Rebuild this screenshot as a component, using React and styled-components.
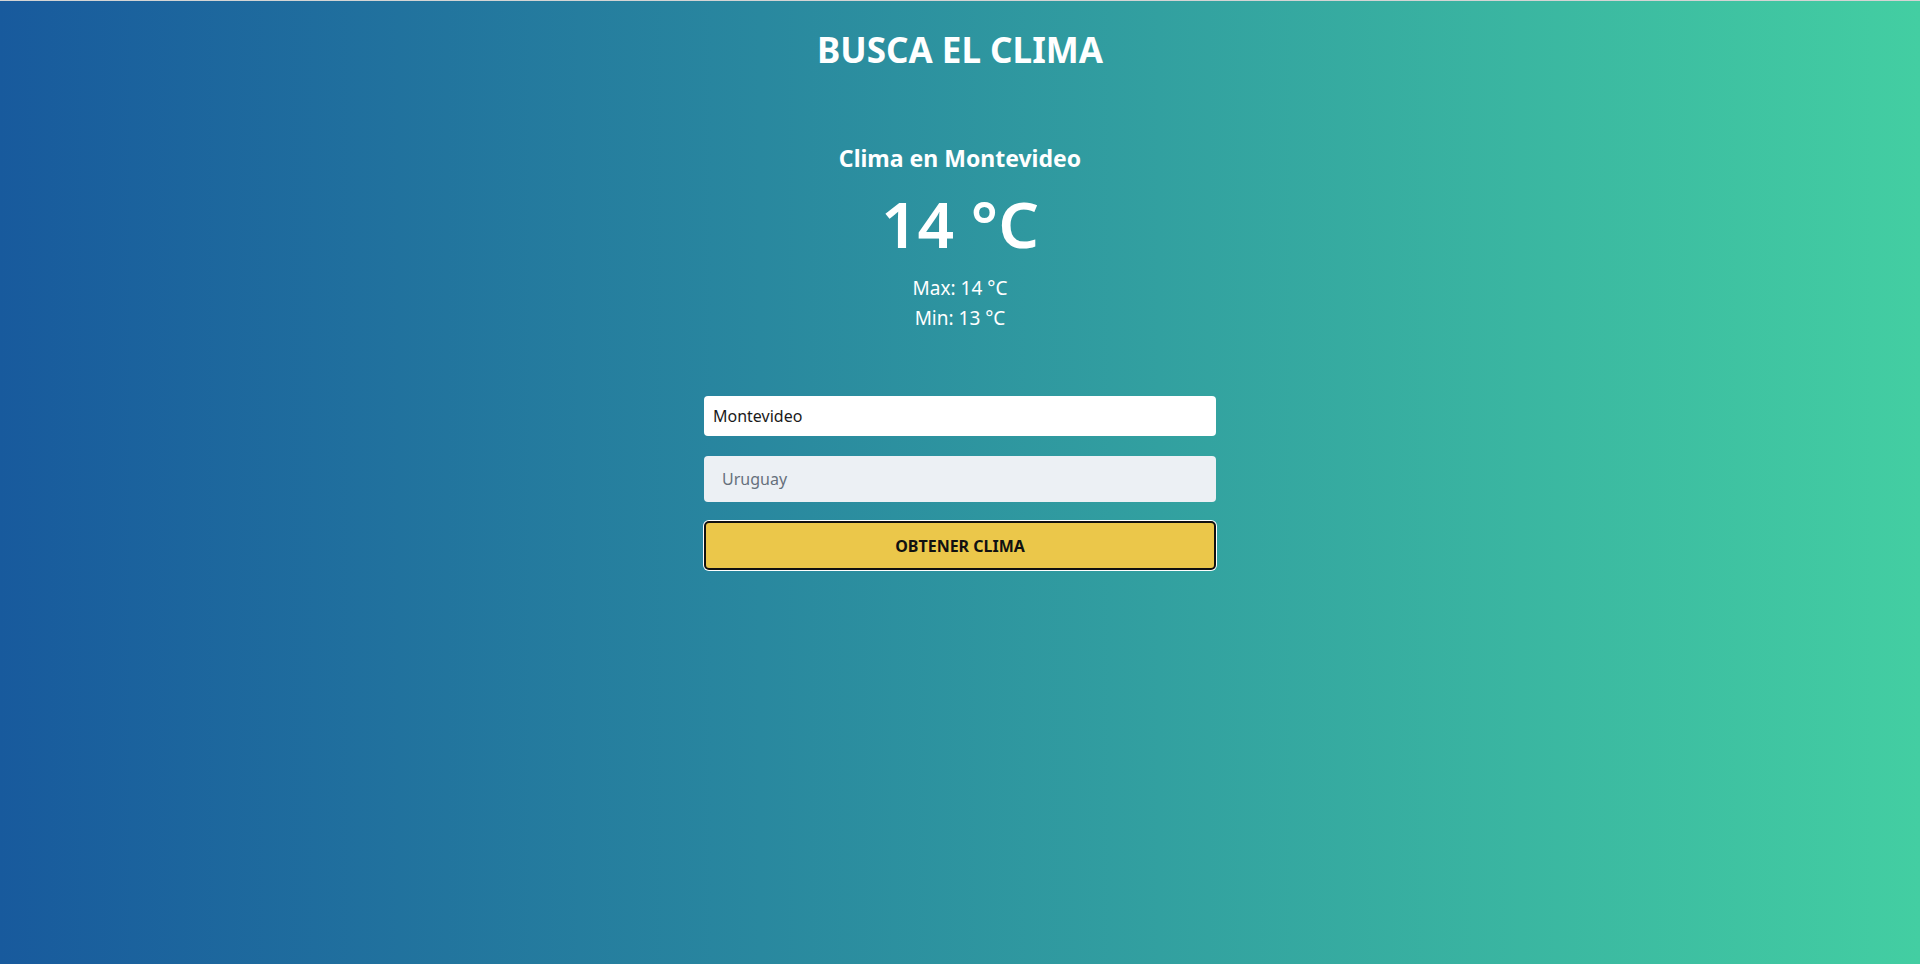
import styled, { createGlobalStyle } from "styled-components";

const GlobalStyle = createGlobalStyle`
  * {
    box-sizing: border-box;
  }

  body {
    margin: 0;
    font-family: "Noto Sans", "Open Sans", sans-serif;
  }
`;

export default function App() {
  return (
    <>
      <GlobalStyle />
      <Page>
        <Title>BUSCA EL CLIMA</Title>
        <Weather>
          <City>Clima en Montevideo</City>
          <Temp>14 °C</Temp>
          <Range>Max: 14 °C</Range>
          <Range>Min: 13 °C</Range>
        </Weather>
        <Form onSubmit={(e) => e.preventDefault()}>
          <CityInput type="text" defaultValue="Montevideo" />
          <CountryInput type="text" placeholder="Uruguay" />
          <Button type="submit">OBTENER CLIMA</Button>
        </Form>
      </Page>
    </>
  );
}

const Page = styled.main`
  min-height: 100vh;
  border-top: 1px solid #d4d4d4;
  background: linear-gradient(to right, #185a9d, #43cea2);
  color: #fff;
  display: flex;
  flex-direction: column;
  align-items: center;
  padding-top: 29px;
`;

const Title = styled.h1`
  margin: 0;
  font-size: 35px;
  line-height: 40px;
  font-weight: 700;
`;

const Weather = styled.section`
  margin-top: 73px;
  display: flex;
  flex-direction: column;
  align-items: center;
`;

const City = styled.h2`
  margin: 0;
  font-size: 23px;
  line-height: 30px;
  font-weight: 700;
`;

const Temp = styled.p`
  margin: 16px 0 14px;
  font-size: 64px;
  line-height: 70px;
  font-weight: 600;
`;

const Range = styled.p`
  margin: 0;
  font-size: 19px;
  line-height: 30px;
`;

const Form = styled.form`
  margin-top: 63px;
  width: 512px;
  display: flex;
  flex-direction: column;
`;

const BaseInput = styled.input`
  width: 100%;
  border: none;
  border-radius: 4px;
  font-family: inherit;
  font-size: 16px;
  outline: none;
`;

const CityInput = styled(BaseInput)`
  height: 40px;
  padding: 0 9px;
  background: #fff;
  color: #1a1a1a;
`;

const CountryInput = styled(BaseInput)`
  height: 46px;
  margin-top: 20px;
  padding: 0 18px;
  background: #ecf0f4;
  color: #333;

  &::placeholder {
    color: #66707c;
  }
`;

const Button = styled.button`
  margin-top: 19px;
  height: 49px;
  width: 100%;
  border: 2px solid #111;
  border-radius: 5px;
  box-shadow: 0 0 0 1px #fff;
  background: #ebc74a;
  color: #111;
  font-family: inherit;
  font-size: 16px;
  font-weight: 700;
  cursor: pointer;
`;
